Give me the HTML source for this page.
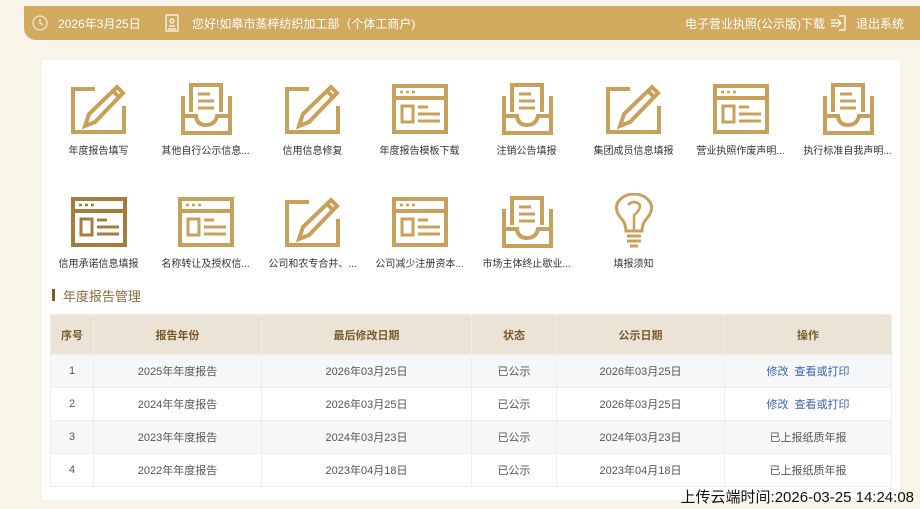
<!DOCTYPE html>
<html><head><meta charset="utf-8"><style>
*{margin:0;padding:0;box-sizing:border-box}
body{width:920px;height:509px;overflow:hidden;background:#f8f4ea;font-family:"Liberation Sans","Noto Sans CJK SC",sans-serif;position:relative}
.bar{position:absolute;left:24px;top:6px;width:896px;height:34px;background:#d1a95f;border-radius:0 0 0 12px;color:#fff;font-size:12px}
.bar span{position:absolute;top:9px}
.panel{position:absolute;left:42px;top:60px;width:858px;height:440px;background:#fff}
.ic{position:absolute;width:107px;text-align:center;font-size:10px;color:#333}
.ic svg{display:block;margin:0 auto 6px;width:60px;height:54px}
.title{position:absolute;left:52px;top:286px;font-size:13px;color:#8a6b3e}
.title:before{content:"";position:absolute;left:0;top:3px;width:3px;height:12px;background:#8b5a1b}
table{position:absolute;left:50px;top:314px;width:842px;border-collapse:collapse;font-size:11px;color:#555;text-align:center}
th{background:#ece3d7;color:#7a5a2b;height:40px;border:1px solid #f2ece4;font-weight:bold}
td{height:33px;border:1px solid #eceef0}
tr.g td{background:#f5f7f9}
a{color:#3b64b0;text-decoration:none;margin:0 3px}
.up{position:absolute;right:6px;top:486px;font-size:15px;color:#111}
</style></head><body>
<svg width="0" height="0" style="position:absolute">
<defs>
<g id="edit" fill="none" stroke="currentColor" stroke-width="4">
<path d="M26 7H4V50H55V24"/><path d="M16 44L20 32L48 5L54 11L26 40Z"/><path d="M44 9L50 15"/>
</g>
<g id="box" fill="none" stroke="currentColor" stroke-width="4">
<path d="M7 14V51H54V14"/><path d="M7 34H20Q21 43 30 43Q39 43 41 34H54"/><path d="M15 30V3H45V30"/><path d="M22 12H34M22 19H38M22 26H38" stroke-width="3"/>
</g>
<g id="win" fill="none" stroke="currentColor" stroke-width="4">
<rect x="4" y="4" width="52" height="46"/><path d="M4 16H56"/><path d="M10 10H13M16 10H19M22 10H25" stroke-width="2.5"/><rect x="12" y="24" width="11" height="16" stroke-width="3"/><path d="M28 25H38M28 32H50M28 39H50" stroke-width="3"/>
</g>
<g id="bulb" fill="none" stroke="currentColor" stroke-width="3">
<path d="M22 38Q22 30 16 24Q10 16 14 9Q20 1 30 1Q40 1 46 9Q50 16 44 24Q38 30 38 38Z"/><path d="M24 12Q30 6 36 12Q36 18 30 22V38" stroke-width="2.5"/><path d="M23 43H37M23 48H37M26 53H34"/>
</g>
</defs></svg>
<div class="bar">
<svg style="position:absolute;left:8px;top:9px" width="16" height="16" viewBox="0 0 16 16" fill="none" stroke="#f5e8cc" stroke-width="1.3"><circle cx="8" cy="8" r="7"/><path d="M8 4V8L11 10"/></svg>
<span style="left:34px">2026年3月25日</span>
<svg style="position:absolute;left:141px;top:8px" width="14" height="18" viewBox="0 0 14 18" fill="none" stroke="#fff" stroke-width="1.2"><rect x="1" y="1" width="12" height="16"/><circle cx="7" cy="7" r="2"/><path d="M4 12H10M3 15H11"/></svg>
<span style="left:168px">您好!如皋市蒸梓纺织加工部（个体工商户)</span>
<span style="left:661px">电子营业执照(公示版)下载</span>
<svg style="position:absolute;left:806px;top:9px" width="16" height="16" viewBox="0 0 16 16" fill="none" stroke="#fff" stroke-width="1.2"><path d="M9 1H15V15H9"/><path d="M1 8H11M7 4L11 8L7 12M1 5H6M1 11H6"/></svg>
<span style="left:832px">退出系统</span>
</div>
<div class="panel"></div>
<div class="ic" style="left:45px;top:82px;color:#333"><svg viewBox="0 0 60 54" style="color:#c9a05a"><use href="#edit"/></svg>年度报告填写</div>
<div class="ic" style="left:152px;top:82px"><svg viewBox="0 0 60 54" style="color:#c9a05a"><use href="#box"/></svg>其他自行公示信息...</div>
<div class="ic" style="left:259px;top:82px"><svg viewBox="0 0 60 54" style="color:#c9a05a"><use href="#edit"/></svg>信用信息修复</div>
<div class="ic" style="left:366px;top:82px"><svg viewBox="0 0 60 54" style="color:#c9a05a"><use href="#win"/></svg>年度报告模板下载</div>
<div class="ic" style="left:473px;top:82px"><svg viewBox="0 0 60 54" style="color:#c9a05a"><use href="#box"/></svg>注销公告填报</div>
<div class="ic" style="left:580px;top:82px"><svg viewBox="0 0 60 54" style="color:#c9a05a"><use href="#edit"/></svg>集团成员信息填报</div>
<div class="ic" style="left:687px;top:82px"><svg viewBox="0 0 60 54" style="color:#c9a05a"><use href="#win"/></svg>营业执照作废声明...</div>
<div class="ic" style="left:794px;top:82px"><svg viewBox="0 0 60 54" style="color:#c9a05a"><use href="#box"/></svg>执行标准自我声明...</div>
<div class="ic" style="left:45px;top:195px"><svg viewBox="0 0 60 54" style="color:#a47d3c"><use href="#win"/></svg>信用承诺信息填报</div>
<div class="ic" style="left:152px;top:195px"><svg viewBox="0 0 60 54" style="color:#c9a05a"><use href="#win"/></svg>名称转让及授权信...</div>
<div class="ic" style="left:259px;top:195px"><svg viewBox="0 0 60 54" style="color:#c9a05a"><use href="#edit"/></svg>公司和农专合并、...</div>
<div class="ic" style="left:366px;top:195px"><svg viewBox="0 0 60 54" style="color:#c9a05a"><use href="#win"/></svg>公司减少注册资本...</div>
<div class="ic" style="left:473px;top:195px"><svg viewBox="0 0 60 54" style="color:#c9a05a"><use href="#box"/></svg>市场主体终止歇业...</div>
<div class="ic" style="left:580px;top:193px"><svg viewBox="0 0 60 56" style="color:#c9a05a;height:56px;margin-bottom:6px"><use href="#bulb"/></svg>填报须知</div>
<div class="title">&nbsp;&nbsp;&nbsp;年度报告管理</div>
<table>
<tr><th style="width:43px">序号</th><th style="width:168px">报告年份</th><th style="width:210px">最后修改日期</th><th style="width:85px">状态</th><th style="width:168px">公示日期</th><th>操作</th></tr>
<tr class="g"><td>1</td><td>2025年年度报告</td><td>2026年03月25日</td><td>已公示</td><td>2026年03月25日</td><td><a>修改</a><a>查看或打印</a></td></tr>
<tr><td>2</td><td>2024年年度报告</td><td>2026年03月25日</td><td>已公示</td><td>2026年03月25日</td><td><a>修改</a><a>查看或打印</a></td></tr>
<tr class="g"><td>3</td><td>2023年年度报告</td><td>2024年03月23日</td><td>已公示</td><td>2024年03月23日</td><td>已上报纸质年报</td></tr>
<tr><td>4</td><td>2022年年度报告</td><td>2023年04月18日</td><td>已公示</td><td>2023年04月18日</td><td>已上报纸质年报</td></tr>
</table>
<div class="up">上传云端时间:2026-03-25 14:24:08</div>
</body></html>
